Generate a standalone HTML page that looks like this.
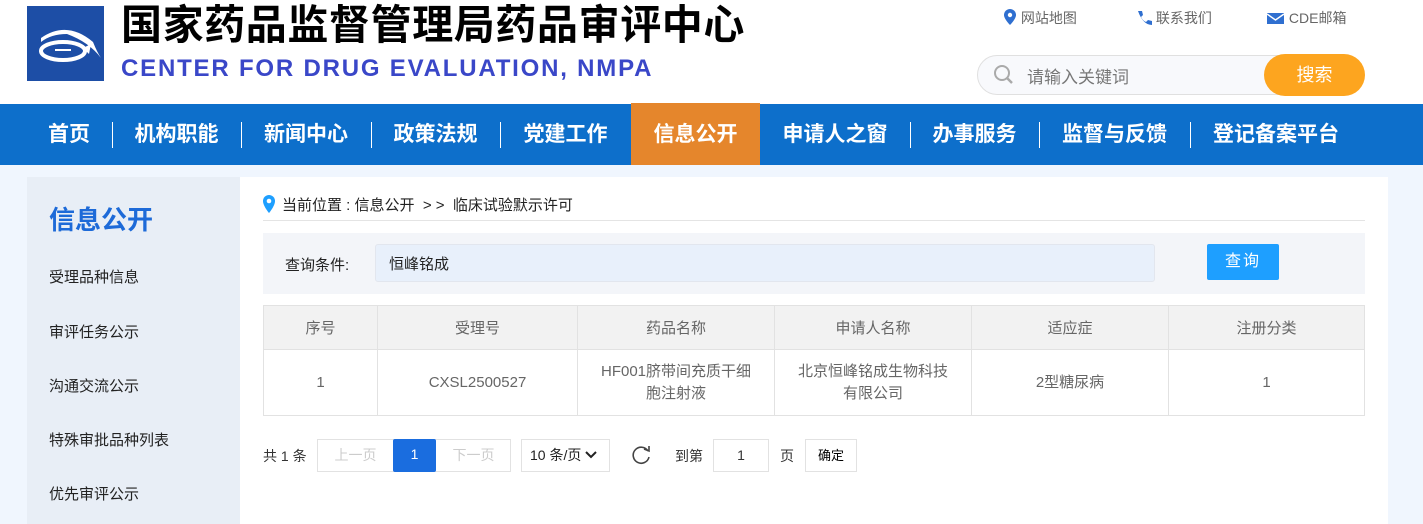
<!DOCTYPE html>
<html><head><meta charset="utf-8"><style>
*{margin:0;padding:0;box-sizing:border-box}
body{width:1423px;height:524px;overflow:hidden;background:#f0f6fe;font-family:"Liberation Sans","Noto Sans CJK SC",sans-serif;position:relative}
.a{position:absolute}
#hdr{left:0;top:0;width:1423px;height:104px;background:#fff}
.t1{left:121px;top:0;font-size:41px;font-weight:bold;color:#000;letter-spacing:0.6px;white-space:nowrap;line-height:50px}
.t2{left:121px;top:54px;font-size:24px;font-weight:bold;color:#3a47c8;letter-spacing:1.8px;white-space:nowrap;line-height:30px}
.tl{font-size:14px;color:#666;top:8px;line-height:20px;white-space:nowrap}
#nav{left:0;top:104px;width:1423px;height:61px;background:#0d6fcb}
.ni{position:absolute;top:0;height:61px;line-height:61px;color:#fff;font-size:21px;font-weight:bold;text-align:center;white-space:nowrap}
.sep{position:absolute;top:18px;width:1px;height:26px;background:#fff}
#side{left:27px;top:177px;width:213px;height:347px;background:#e8eef6}
.si{position:absolute;left:22px;font-size:15px;color:#222}
#main{left:240px;top:177px;width:1148px;height:347px;background:#fff}
table{border-collapse:collapse;position:absolute;left:263px;top:305px;width:1102px}
td,th{border:1px solid #e2e2e2;text-align:center;font-size:15px;color:#666;font-weight:normal}
th{background:#f2f2f2;height:44px}
td{height:66px;line-height:22px}
.pb{position:absolute;top:439px;height:33px;border:1px solid #e2e2e2;background:#fff;font-size:14px;text-align:center;line-height:31px;color:#333}
</style></head><body>
<div id="hdr" class="a">
<div class="a" style="left:27px;top:6px;width:77px;height:75px;background:#1d4ea6">
<svg width="77" height="75"><path d="M14 32 Q40 14 66 36 Q70 46 74 52 Q62 36 40 28 Q24 28 14 36Z" fill="#fff"/><ellipse cx="36" cy="45" rx="22" ry="9" fill="none" stroke="#fff" stroke-width="4"/><path d="M28 44 h16" stroke="#fff" stroke-width="2"/><path d="M56 42 l8 -4 l-2 10z" fill="#fff"/></svg></div>
<div class="a t1">国家药品监督管理局药品审评中心</div>
<div class="a t2">CENTER FOR DRUG EVALUATION, NMPA</div>
<div class="a tl" style="left:1003px"><svg width="14" height="18" style="vertical-align:-3px"><path d="M7 1a6 6 0 0 1 6 6c0 4-6 10-6 10S1 11 1 7a6 6 0 0 1 6-6z" fill="#2f6fd0"/><circle cx="7" cy="7" r="2.2" fill="#fff"/></svg> 网站地图</div>
<div class="a tl" style="left:1135px"><svg width="17" height="17" style="vertical-align:-3px"><path d="M3 2l4 0 1 4-2 2q2 4 5 5l2-2 4 1v4q-9 0-14-14z" fill="#2f6fd0"/></svg> 联系我们</div>
<div class="a tl" style="left:1267px"><svg width="18" height="14" style="vertical-align:-2px"><rect x="0" y="2" width="17" height="11" fill="#2f6fd0"/><path d="M0 3l8.5 6 8.5-6" stroke="#fff" stroke-width="1.5" fill="none"/></svg> CDE邮箱</div>
<div class="a" style="left:977px;top:55px;width:387px;height:40px;border:1px solid #e0e0e0;border-radius:20px;background:#f8f9fc"></div>
<svg class="a" style="left:992px;top:63px" width="24" height="24"><circle cx="10" cy="10" r="7" fill="none" stroke="#aaa" stroke-width="2"/><path d="M15 15l5 5" stroke="#aaa" stroke-width="2.5"/></svg>
<div class="a" style="left:1027px;top:63px;font-size:17px;color:#777">请输入关键词</div>
<div class="a" style="left:1264px;top:54px;width:101px;height:42px;border-radius:21px;background:#fda51f;color:#fff;font-size:18px;text-align:center;line-height:42px">搜索</div>
</div>
<div id="nav" class="a">
<div class="a" style="left:631px;top:-1px;width:129px;height:62px;background:#e5862c"></div>
<div class="ni" style="left:26px;width:86px">首页</div><div class="sep" style="left:112px"></div>
<div class="ni" style="left:112px;width:129px">机构职能</div><div class="sep" style="left:241px"></div>
<div class="ni" style="left:241px;width:130px">新闻中心</div><div class="sep" style="left:371px"></div>
<div class="ni" style="left:371px;width:129px">政策法规</div><div class="sep" style="left:500px"></div>
<div class="ni" style="left:500px;width:131px">党建工作</div>
<div class="ni" style="left:631px;width:129px">信息公开</div>
<div class="ni" style="left:760px;width:150px">申请人之窗</div><div class="sep" style="left:910px"></div>
<div class="ni" style="left:910px;width:129px">办事服务</div><div class="sep" style="left:1039px"></div>
<div class="ni" style="left:1039px;width:151px">监督与反馈</div><div class="sep" style="left:1190px"></div>
<div class="ni" style="left:1190px;width:172px">登记备案平台</div>
</div>
<div id="side" class="a">
<div class="a" style="left:22px;top:23px;font-size:26px;font-weight:bold;color:#1d6ad8">信息公开</div>
<div class="si" style="top:89px">受理品种信息</div>
<div class="si" style="top:144px">审评任务公示</div>
<div class="si" style="top:198px">沟通交流公示</div>
<div class="si" style="top:252px">特殊审批品种列表</div>
<div class="si" style="top:306px">优先审评公示</div>
</div>
<div id="main" class="a"></div>
<svg class="a" style="left:262px;top:194px" width="14" height="20"><path d="M7 1a6 6 0 0 1 6 6c0 5-6 12-6 12S1 12 1 7a6 6 0 0 1 6-6z" fill="#1e9fff"/><circle cx="7" cy="7" r="2.3" fill="#fff"/></svg>
<div class="a" style="left:282px;top:194px;font-size:15px;color:#222;white-space:nowrap">当前位置 : 信息公开 &nbsp;&gt; &gt; &nbsp;临床试验默示许可</div>
<div class="a" style="left:263px;top:220px;width:1102px;height:1px;background:#e4e4e4"></div>
<div class="a" style="left:263px;top:233px;width:1102px;height:61px;background:#f3f5f9"></div>
<div class="a" style="left:285px;top:254px;font-size:15px;color:#222">查询条件:</div>
<div class="a" style="left:375px;top:244px;width:780px;height:38px;background:#e8f0fb;border:1px solid #e2e6ee;border-radius:3px;font-size:15px;color:#222;line-height:40px;padding-left:13px">恒峰铭成</div>
<div class="a" style="left:1207px;top:244px;width:72px;height:36px;background:#1e9fff;border-radius:2px;color:#fff;font-size:16px;text-align:center;line-height:36px;letter-spacing:2px">查询</div>
<table>
<tr><th style="width:114px">序号</th><th style="width:200px">受理号</th><th style="width:197px">药品名称</th><th style="width:197px">申请人名称</th><th style="width:197px">适应症</th><th>注册分类</th></tr>
<tr><td>1</td><td>CXSL2500527</td><td>HF001脐带间充质干细<br>胞注射液</td><td>北京恒峰铭成生物科技<br>有限公司</td><td>2型糖尿病</td><td>1</td></tr>
</table>
<div class="a" style="left:263px;top:446px;font-size:14px;color:#333">共 1 条</div>
<div class="pb" style="left:317px;width:194px;color:#ccc"><span style="position:absolute;left:0;width:75px">上一页</span><span style="position:absolute;left:75px;width:43px;top:-1px;height:33px;background:#1a6ddf;color:#fff;border-radius:2px">1</span><span style="position:absolute;left:118px;width:75px">下一页</span></div>
<div class="pb" style="left:521px;width:89px;text-align:left;padding-left:8px;color:#222">10 条/页 <svg width="12" height="10" style="vertical-align:0"><path d="M1 2l5 5 5-5" stroke="#222" stroke-width="2" fill="none"/></svg></div>
<svg class="a" style="left:631px;top:444px" width="22" height="22"><path d="M17 7A8 8 0 1 0 18 13" stroke="#444" stroke-width="1.6" fill="none"/><path d="M13 5l5 2 0-5" stroke="#444" stroke-width="1.6" fill="none"/></svg>
<div class="a" style="left:675px;top:446px;font-size:14px;color:#333">到第</div>
<div class="pb" style="left:713px;width:56px">1</div>
<div class="a" style="left:780px;top:446px;font-size:14px;color:#333">页</div>
<div class="pb" style="left:805px;width:52px;font-size:13px;color:#000">确定</div>
</body></html>
